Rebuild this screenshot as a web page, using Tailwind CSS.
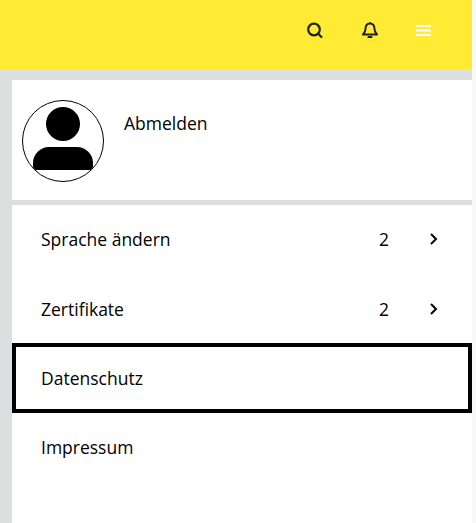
<!DOCTYPE html>
<html lang="en">
<head>
    <meta charset="UTF-8">
    <title>Menu</title>
    <script src="https://cdn.jsdelivr.net/npm/@tailwindcss/browser@4"></script>
</head>
<body class="bg-[#f9f9f9] font-['Open_Sans',sans-serif] text-[17.5px] text-black overflow-hidden">
    <div class="h-[523px] w-[472px] flex flex-col bg-[#dadfdf]">
        <header class="h-[70px] bg-[#ffeb33] border-b-[3px] border-[#e0e0e0] box-content shrink-0 flex items-center pb-0">
            <div class="ml-[305px] -mt-[10px] flex items-center">
                <svg class="w-[20px] h-[20px]" viewBox="0 0 20 20" fill="none" stroke="#222" stroke-width="2.2"><circle cx="9" cy="9.5" r="5.8"/><path d="M13.500 14l3 3" stroke-linecap="round"/></svg>
                <svg class="ml-[35px] w-[20px] h-[20px]" viewBox="0 0 20 20" fill="none" stroke="#222" stroke-width="2"><path d="M3 14.500c1.500-1.500 2.500-2.500 2.500-5.500 0-3.500 1.800-5.500 4.500-5.500s4.500 2 4.500 5.500c0 3 1 4 2.500 5.500z" stroke-linejoin="round"/><path d="M10 2v1.500" stroke-width="1.500"/><path d="M8.500 17h3" stroke-width="2.200" stroke-linecap="round"/></svg>
                <svg class="ml-[36px] w-[15px] h-[11px]" viewBox="0 0 15 11" fill="#fff"><rect y="0" width="15" height="2"/><rect y="4.500" width="15" height="2"/><rect y="9" width="15" height="2"/></svg>
            </div>
        </header>
        <main class="flex-1 ml-[12px] mt-[7px] bg-white">
            <div class="h-[120px] flex border-b-[5px] border-[#dddddd] box-content">
                <div class="ml-[10px] mt-[20px] w-[82px] h-[82px] rounded-full border border-black overflow-hidden flex flex-col items-center">
                    <div class="mt-[6px] w-[34px] h-[34px] rounded-full bg-black"></div>
                    <div class="mt-[6px] w-[60px] h-[23px] bg-black rounded-t-[16px]"></div>
                </div>
                <a href="#" class="ml-[20px] mt-[30px] h-[24px]">Abmelden</a>
            </div>
            <ul>
                <li class="h-[69px] pl-[29px] flex items-center">
                    <span class="flex-1">Sprache ändern</span>
                    <span class="w-[10px]">2</span>
                    <svg class="ml-[39px] mr-[32px] w-[12px] h-[12px] -translate-y-px" viewBox="0 0 12 12" fill="none" stroke="#000" stroke-width="2"><path d="M3 1l5 5-5 5"/></svg>
                </li>
                <li class="h-[69px] pl-[29px] pt-[2px] flex items-center">
                    <span class="flex-1">Zertifikate</span>
                    <span class="w-[10px]">2</span>
                    <svg class="ml-[39px] mr-[32px] w-[12px] h-[12px] -translate-y-px" viewBox="0 0 12 12" fill="none" stroke="#000" stroke-width="2"><path d="M3 1l5 5-5 5"/></svg>
                </li>
                <li class="h-[70px] pl-[25px] border-4 border-black flex items-center">Datenschutz</li>
                <li class="h-[69px] pl-[29px] flex items-center">Impressum</li>
            </ul>
        </main>
    </div>
</body>
</html>
